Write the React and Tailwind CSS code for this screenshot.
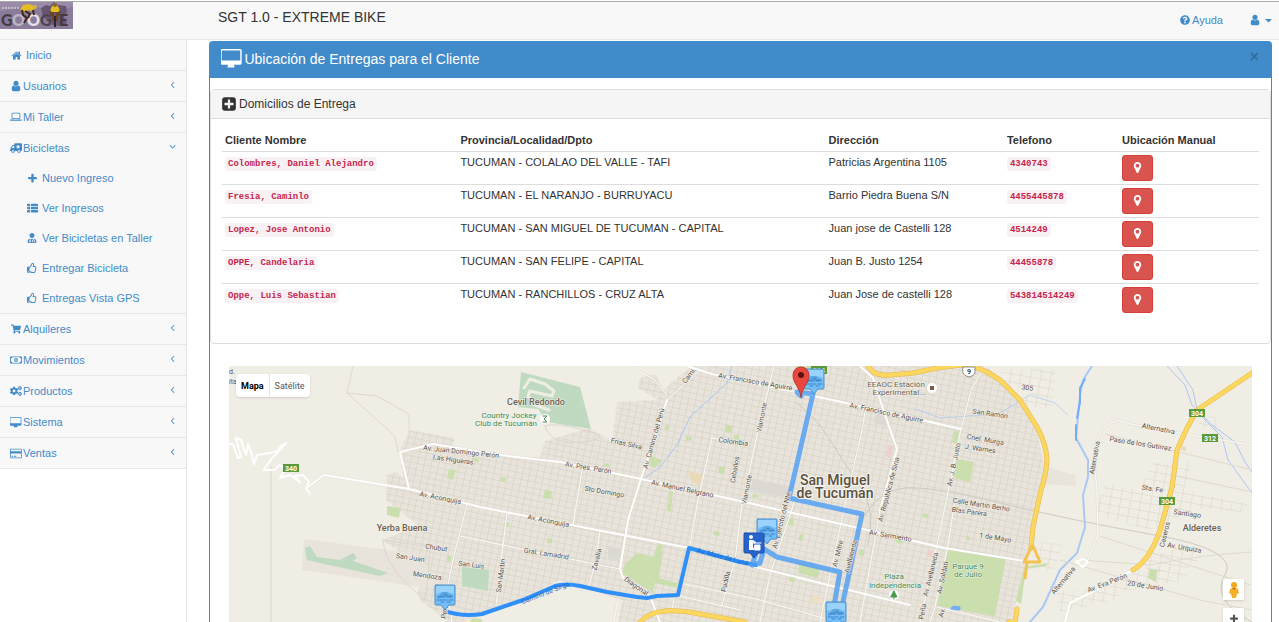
import { FaAmbulance, FaUserMd, FaRegThumbsUp, FaShoppingCart, FaRegMoneyBillAlt, FaCogs, FaQuestionCircle } from "react-icons/fa";

const PATHS = {
  home: [1792, "M1472 992v480q0 26-19 45t-45 19h-384v-384h-256v384h-384q-26 0-45-19t-19-45v-480q0-1 .5-3t.5-3l575-474 575 474q1 2 1 6zm223-69l-62 74q-8 9-21 11h-3q-13 0-21-7l-692-577-692 577q-12 8-24 7-13-2-21-11l-62-74q-8-10-7-23.5t11-21.5l719-599q32-26 76-26t76 26l244 204v-195q0-14 9-23t23-9h192q14 0 23 9t9 23v408l219 182q10 8 11 21.5t-7 23.5z"],
  user: [1792, "M1536 1399q0 109-62.5 187t-150.5 78h-854q-88 0-150.5-78t-62.5-187q0-85 8.5-160.5t31.5-152 58.5-131 94-89 134.5-34.5q131 128 313 128t313-128q76 0 134.5 34.5t94 89 58.5 131 31.5 152 8.5 160.5zm-256-887q0 159-112.5 271.5t-271.5 112.5-271.5-112.5-112.5-271.5 112.5-271.5 271.5-112.5 271.5 112.5 112.5 271.5z"],
  laptop: [1920, "M416 1152q-66 0-113-47t-47-113v-704q0-66 47-113t113-47h1088q66 0 113 47t47 113v704q0 66-47 113t-113 47h-1088zm-32-864v704q0 13 9.5 22.5t22.5 9.5h1088q13 0 22.5-9.5t9.5-22.5v-704q0-13-9.5-22.5t-22.5-9.5h-1088q-13 0-22.5 9.5t-9.5 22.5zm1376 928h160v96q0 40-47 68t-113 28h-1600q-66 0-113-28t-47-68v-96h1760zm-720 96q16 0 16-16t-16-16h-160q-16 0-16 16t16 16h160z"],
  desktop: [1920, "M1728 992v-832q0-13-9.5-22.5t-22.5-9.5h-1600q-13 0-22.5 9.5t-9.5 22.5v832q0 13 9.5 22.5t22.5 9.5h1600q13 0 22.5-9.5t9.5-22.5zm128-832v1088q0 66-47 113t-113 47h-544q0 37 16 77.5t32 71 16 43.5q0 26-19 45t-45 19h-512q-26 0-45-19t-19-45q0-14 16-44t32-70 16-78h-544q-66 0-113-47t-47-113v-1088q0-66 47-113t113-47h1600q66 0 113 47t47 113z"],
  card: [1920, "M1760 128q66 0 113 47t47 113v1216q0 66-47 113t-113 47h-1600q-66 0-113-47t-47-113v-1216q0-66 47-113t113-47h1600zm-1600 128q-13 0-22.5 9.5t-9.5 22.5v224h1664v-224q0-13-9.5-22.5t-22.5-9.5h-1600zm1600 1280q13 0 22.5-9.5t9.5-22.5v-608h-1664v608q0 13 9.5 22.5t22.5 9.5h1600zm-1504-128v-128h256v128h-256zm384 0v-128h384v128h-384z"],
  plus: [1792, "M1600 736v192q0 40-28 68t-68 28h-416v416q0 40-28 68t-68 28h-192q-40 0-68-28t-28-68v-416h-416q-40 0-68-28t-28-68v-192q0-40 28-68t68-28h416v-416q0-40 28-68t68-28h192q40 0 68 28t28 68v416h416q40 0 68 28t28 68z"],
  list: [1792, "M512 1248v192q0 40-28 68t-68 28h-320q-40 0-68-28t-28-68v-192q0-40 28-68t68-28h320q40 0 68 28t28 68zm0-512v192q0 40-28 68t-68 28h-320q-40 0-68-28t-28-68v-192q0-40 28-68t68-28h320q40 0 68 28t28 68zm1280 512v192q0 40-28 68t-68 28h-960q-40 0-68-28t-28-68v-192q0-40 28-68t68-28h960q40 0 68 28t28 68zm-1280-1024v192q0 40-28 68t-68 28h-320q-40 0-68-28t-28-68v-192q0-40 28-68t68-28h320q40 0 68 28t28 68zm1280 512v192q0 40-28 68t-68 28h-960q-40 0-68-28t-28-68v-192q0-40 28-68t68-28h960q40 0 68 28t28 68zm0-512v192q0 40-28 68t-68 28h-960q-40 0-68-28t-28-68v-192q0-40 28-68t68-28h960q40 0 68 28t28 68z"],
  plusSquare: [1792, "M1408 960v-128q0-26-19-45t-45-19h-320v-320q0-26-19-45t-45-19h-128q-26 0-45 19t-19 45v320h-320q-26 0-45 19t-19 45v128q0 26 19 45t45 19h320v320q0 26 19 45t45 19h128q26 0 45-19t19-45v-320h320q26 0 45-19t19-45zm256-544v960q0 119-84.5 203.5t-203.5 84.5h-960q-119 0-203.5-84.5t-84.5-203.5v-960q0-119 84.5-203.5t203.5-84.5h960q119 0 203.5 84.5t84.5 203.5z"],
  marker: [1792, "M1152 640q0-106-75-181t-181-75-181 75-75 181 75 181 181 75 181-75 75-181zm256 0q0 109-33 179l-364 774q-16 33-47.5 52t-67.5 19-67.5-19-46.5-52l-365-774q-33-70-33-179 0-212 150-362t362-150 362 150 150 362z"],
  left: [1792, "M1203 544q0 13-10 23l-393 393 393 393q10 10 10 23t-10 23l-50 50q-10 10-23 10t-23-10l-466-466q-10-10-10-23t10-23l466-466q10-10 23-10t23 10l50 50q10 10 10 23z"],
  down: [1792, "M1395 736q0 13-10 23l-466 466q-10 10-23 10t-23-10l-466-466q-10-10-10-23t10-23l50-50q10-10 23-10t23 10l393 393 393-393q10-10 23-10t23 10l50 50q10 10 10 23z"],
  caret: [1792, "M1408 704q0 26-19 45l-448 448q-19 19-45 19t-45-19l-448-448q-19-19-19-45t19-45 45-19h896q26 0 45 19t19 45z"],
};

function Icon({ name, className = "h-[11px] w-auto" }) {
  const [w, d] = PATHS[name];
  return (
    <svg viewBox={`0 0 ${w} 1792`} className={`shrink-0 ${className}`} fill="currentColor" aria-hidden="true">
      <path d={d} />
    </svg>
  );
}

const MENU = [
  { label: "Inicio", icon: <Icon name="home" />, gap: true },
  { label: "Usuarios", icon: <Icon name="user" className="size-3" />, arrow: "left" },
  { label: "Mi Taller", icon: <Icon name="laptop" />, arrow: "left" },
  {
    label: "Bicicletas",
    icon: <FaAmbulance size={12} className="-scale-x-100" />,
    arrow: "down",
    children: [
      { label: "Nuevo Ingreso", icon: <Icon name="plus" /> },
      { label: "Ver Ingresos", icon: <Icon name="list" /> },
      { label: "Ver Bicicletas en Taller", icon: <FaUserMd size={10} /> },
      { label: "Entregar Bicicleta", icon: <FaRegThumbsUp size={10} /> },
      { label: "Entregas Vista GPS", icon: <FaRegThumbsUp size={10} /> },
    ],
  },
  { label: "Alquileres", icon: <FaShoppingCart size={10} />, arrow: "left" },
  { label: "Movimientos", icon: <FaRegMoneyBillAlt size={12} />, arrow: "left" },
  { label: "Productos", icon: <FaCogs size={12} />, arrow: "left" },
  { label: "Sistema", icon: <Icon name="desktop" />, arrow: "left" },
  { label: "Ventas", icon: <Icon name="card" />, arrow: "left" },
];

const ROWS = [
  ["Colombres, Daniel Alejandro", "TUCUMAN - COLALAO DEL VALLE - TAFI", "Patricias Argentina 1105", "4340743"],
  ["Fresia, Caminlo", "TUCUMAN - EL NARANJO - BURRUYACU", "Barrio Piedra Buena S/N", "4455445878"],
  ["Lopez, Jose Antonio", "TUCUMAN - SAN MIGUEL DE TUCUMAN - CAPITAL", "Juan jose de Castelli 128", "4514249"],
  ["OPPE, Candelaria", "TUCUMAN - SAN FELIPE - CAPITAL", "Juan B. Justo 1254", "44455878"],
  ["Oppe, Luis Sebastian", "TUCUMAN - RANCHILLOS - CRUZ ALTA", "Juan Jose de castelli 128", "543814514249"],
];

function Logo() {
  return (
    <svg viewBox="0 0 73 27" className="h-[27px] w-[73px]" role="img" aria-label="Logo">
      <rect width="73" height="27" fill="#8b7b9b" />
      <path d="M0 0h73v5l-20 3L30 4 0 9z" fill="#9a8ba9" />
      <path d="M41 6l5-3 4 1 4-4 4 3 8 1 1 6-3 5 3 6-6 3-8-1-5-5-5-3z" fill="#675673" />
      <path d="M2 6h17" stroke="#d5cedd" strokeWidth="2" strokeDasharray="2 1" opacity=".7" />
      <g fontFamily="Lato, sans-serif" fontWeight="900" fontSize="16">
        <text x="1" y="24" fill="#463c43">G</text>
        <text x="12" y="24" fill="#bdb6c2">O</text>
        <text x="27" y="24" fill="#e6e2e8">O</text>
        <text x="40" y="24" fill="#4f4552">G</text>
        <text x="59" y="24" fill="#463a3d">E</text>
      </g>
      <path d="M20 8l3-5 6-1 5 2 1 3-4 2-2-1-4 2z" fill="#e5bd24" />
      <circle cx="35" cy="5" r="2" fill="#cdb25a" />
      <path d="M22 8l1 5 4 3-3 5M25 9l5 3-2 4M33 8l1 5" stroke="#3b2a1c" strokeWidth="2" fill="none" />
      <path d="M51 6l2-3 2-2 2 2 2 3 1 4h-10z" fill="#e5bd24" />
      <circle cx="55" cy="3" r="2" fill="#8a6a2a" />
      <path d="M50 9l2 5M60 9l-2 5M53 10v9M57 10v9" stroke="#6a4424" strokeWidth="2" fill="none" />
      <path d="M55 14v11" stroke="#2f2730" strokeWidth="2" />
    </svg>
  );
}

const LABELS = [
  [461, 454, 7, 6, "Av. Juan Domingo Perón"],
  [453, 462, 7, 8, "Las Higueras"],
  [440, 500, 7, 11, "Av. Aconquija"],
  [548, 523, 7, 11, "Av. Aconquija"],
  [436, 550, 7, 8, "Chubut"],
  [410, 560, 7, 8, "San Juan"],
  [427, 578, 7, 8, "Mendoza"],
  [471, 567, 7, 7, "San Luis"],
  [503, 576, 7, -82, "San Martín"],
  [546, 556, 7, 9, "Gral. Lamadrid"],
  [599, 560, 7, -76, "Zavalía"],
  [626, 446, 7, 13, "Frías Silva"],
  [588, 470, 7, 9, "Av. Pres. Perón"],
  [604, 494, 7, 10, "Sto Domingo"],
  [656, 439, 7, -74, "Av. Camino del Perú"],
  [691, 377, 7, -52, "Cami."],
  [755, 384, 7, 10, "Av. Francisco de Aguirre"],
  [886, 415, 7, 12, "Av. Francisco de Aguirre"],
  [764, 418, 7, -78, "Viamonte"],
  [749, 490, 7, -78, "Viamonte"],
  [733, 444, 7, 8, "Colombia"],
  [737, 470, 7, -80, "Ceballos"],
  [682, 491, 7, 12, "Av. Manuel Belgrano"],
  [635, 588, 7, 35, "Diagonal"],
  [728, 582, 7, -78, "Padilla"],
  [784, 520, 7, -76, "Av. Ejército del Nte."],
  [840, 554, 7, -76, "Av. Mitre"],
  [853, 557, 7, -76, "Avellaneda"],
  [891, 490, 7, -75, "Av. República de Siria"],
  [890, 538, 7, 10, "Av. Sarmiento"],
  [956, 465, 7, -78, "Av. J. B. Justo"],
  [933, 575, 7, -76, "Av. Avellaneda"],
  [945, 578, 7, -78, "Av. Soldati"],
  [925, 612, 7, -78, "Peña"],
  [944, 613, 7, -78, "Av."],
  [990, 416, 7, 8, "San Ramón"],
  [985, 442, 7, 10, "Cnel. Murga"],
  [980, 451, 7, 8, "J. Warnes"],
  [981, 507, 7, 9, "Calle Martín Berho"],
  [969, 514, 7, 7, "Blas Parera"],
  [995, 540, 7, 9, "1 de Mayo"],
  [1027, 390, 7, 8, "305"],
  [1158, 431, 7, 11, "Alternativa"],
  [1140, 446, 7, 9, "Paso de los Gutirrez"],
  [1097, 458, 7, -80, "Alternativa"],
  [1152, 491, 7, 8, "Sta. Fe"],
  [1187, 516, 7, 8, "Santiago"],
  [1167, 535, 7, -76, "Caseros"],
  [1184, 550, 7, 10, "Av. Urquiza"],
  [1108, 585, 7, -21, "Av. Eva Perón"],
  [1145, 588, 7, 9, "20 de Junio"],
  [1065, 582, 7, -50, "Alternativa"],
  [447, 612, 7, -80, "Perú"],
  [232, 374, 7, 0, "d."],
  [233, 384, 7, 0, "ita"],
];

const MAIN_ROADS = [
  "M1133 570L1100 588L1070 603L1065 622",
  "M400 452L433 444L500 455L560 462L641 479L740 501L850 526L944 548L1030 562",
  "M324 475L409 489L400 452M324 475L308 487",
  "M409 489L480 507L571 525L628 536L689 548L760 568L840 588L910 605",
  "M687 366L712 374L860 406L961 429",
  "M860 366L873 378L884 412L897 449L880 510",
  "M667 400L641 479L628 520L620 569L623 578L650 596L660 622",
];

const MINOR_ROADS = [
  "M1252 445L1185 434L1130 424L1117 420L1104 427L1096 442L1094 462L1097 490L1098 535L1087 562",
  "M452 622L447 590L453 560L467 504",
  "M460 536L540 553L620 569",
  "M985 366L971 390L961 429L937 545L920 622",
  "M700 370L667 400M630 366L655 380L667 395",
  "M712 438L740 442M712 438L698 500L690 545",
  "M774 366L756 440L742 505L735 560L722 605",
  "M795 500L770 575L760 622",
  "M880 510L860 622",
  "M865 412L862 430L846 500L820 622",
  "M507 513L500 570L496 606M507 513l4 1",
  "M583 465L573 525M600 530L596 560L588 590",
  "M680 583L760 600L900 640M680 596L740 610",
  "M955 500L948 545L935 607L930 622M937 607L1000 622",
  "M618 598L614 622M674 598L672 612",
];

const PARKS = [
  "M387 506L401 508L399 518L387 515z", "M449 469L456 470L453 480L447 478z", "M447 556h4v5h-4z", "M472 458l7 1v3l-7-1z",
  "M545 490l7 1-1 8-8-1z", "M501 477l5 1-1 4-5-1z", "M505 522l4 1v4h-4z", "M548 538l4 1v4h-5z", "M604 463l5 1v3l-5-1z", "M670 491l3 1-2 20-4-2z",
  "M650 455l12 6-7 7-5-2z", "M666 425l3 1v4l-5-1z", "M685 436l7 1v4l-6-1z", "M726 425l6 1-1 7-6-1z", "M719 466l6 1-1 7-6-1z", "M734 435h5v4h-5z",
  "M714 531l6 1-1 4-5-1z", "M793 366h28l-3 7-19-4z", "M787 518l7 1-1 7-7-2z", "M800 534l4 1-2 6-4-1z", "M799 564l21 4-2 10-20-5z", "M790 575l6 1-2 7-5-2z",
  "M753 494l6 1-1 3-6-1z", "M923 513l5 1v4l-6-1z", "M860 549l5 1-1 6-6-1z", "M957 459l17 3-4 20-16-4z", "M954 431l5 1-2 12-5-2z", "M967 536l3 1-1 4-3-1z",
  "M1150 569l7 1-1 12-8-4z", "M1024 567l24-4-2 3-20 3-5 35-5-3z", "M896 539l7 1-1 4-6-1z", "M472 618l10 1v3h-12z",
];

const SHIELDS = [[1197, 413, "304"], [1210, 438, "312"], [1167, 501, "304"], [291, 468, "340"], [819, 370, "314"]];

const MARKER_SHAPE = "M-9 -25h18q1 0 1 1v18q0 1-1 1h-5l-4 5-4-5h-5q-1 0-1-1v-18q0-1 1-1z";

function CarMarker({ x, y }) {
  return (
    <g transform={`translate(${x} ${y})`}>
      <path d={MARKER_SHAPE} fill="#74bef9" stroke="#4f8fc4" strokeWidth="1" />
      <path d="M-9 -24h18v8q-9-4-18 0z" fill="#a3d7fd" opacity=".8" />
      <path d="M-8 -12q0-3 3-3 2-4 5-3 3-1 4 2 4 0 4 4z" fill="#5ba6e2" />
      <path d="M-7 -12l3-2 2 1 3-3 2 3 4-1M-8 -10h5m1 0h4m2 0h4M-4 -8h3m3 0h3" stroke="#3c84c6" strokeWidth="1" />
    </g>
  );
}

function MapDrawing() {
  return (
    <svg viewBox="229 366 1023 256" preserveAspectRatio="xMidYMid slice" className="block h-full w-full" fill="none" strokeLinejoin="round" strokeLinecap="round" fontFamily="Roboto, sans-serif">
      <defs>
        <pattern id="blocks" width="7" height="6" patternUnits="userSpaceOnUse" patternTransform="rotate(12)">
          <path d="M0 0H7M0 0V6" stroke="#d3cdc0" strokeWidth="1" />
        </pattern>
        <pattern id="sparse" width="10" height="8" patternUnits="userSpaceOnUse" patternTransform="rotate(10)">
          <path d="M0 0H10M0 0V8" stroke="#d8d3c6" strokeWidth="1" />
        </pattern>
      </defs>
      <rect x="0" y="300" width="1600" height="400" fill="#f0ede5" />

      <g id="districts">
        {[
          "M410 430L455 438L452 450L517 458L540 457L545 441L590 428L612 442L617 402L655 400L672 382L692 366L985 366L1010 385L1037 430L1045 470L1033 530L1026 570L1010 622L618 622L622 600L560 580L500 610L462 622L448 622L420 600L418 590L430 575L383 540L418 525L386 500L387 475L396 472L403 478L400 450z",
          "M304 539L420 554L440 590L302 570z",
          "M1042 466L1075 475L1076 486L1041 484z",
          "M640 378L655 374L664 392L655 398L638 388z",
        ].map((d) => (
          <g key={d}>
            <path d={d} fill="#e8e4db" />
            {!d.startsWith("M304") && !d.startsWith("M1042") && <path d={d} fill="url(#blocks)" />}
          </g>
        ))}
        {[
          "M1105 484L1140 490L1152 463L1190 462L1185 490L1250 505L1240 512L1200 508L1150 530L1095 515z",
          "M1002 368L1056 370L1052 410L1020 405L1030 392L1000 385z",
          "M1030 540L1062 545L1055 570L1034 570z",
          "M1057 590L1100 590L1140 570L1190 565L1185 580L1130 590L1115 600L1060 612z",
          "M1195 425L1215 412L1218 430z",
          "M1140 560L1190 545L1200 560L1150 575z",
        ].map((d) => <path key={d} d={d} fill="url(#sparse)" />)}
        <path d="M383 540L430 547L426 600Q385 570 383 540z" stroke="#dcd7cb" strokeWidth="1" />
        <path d="M753 479L793 487L789 498L750 490zM876 414l14 3-3 9-13-3zM608 546l13 3-2 12-11-3z" fill="#dcd8d2" />
        <path d="M688 470l14 5-2 10-8-3zM1181 446l5 1v4l-5-1z" fill="#ebd9b7" />
        <path d="M888 445l5 1-3 12-4-2zM928 550l5 1-2 7-5-2z" fill="#efcfcb" />
        <path d="M813 595l7 2-1 7-7-2z" fill="#efdfc3" />
      </g>

      <g id="parks">
        <path d="M521 372L580 387L591 429L547 422L538 409L518 407z" fill="#bfdac1" />
        <path d="M524 388L530 379L545 384L554 391L552 396L538 393L530 391L528 396L535 405L549 410" stroke="#f0ede5" strokeWidth="3" />
        <path d="M305 548L310 546L317 557L340 560L353 553L357 558L353 561L388 573L380 576L320 563L307 560z" fill="#bfdac1" />
        <path d="M462 567L489 570L488 591L462 586z" fill="#bfdac1" />
        <path d="M637 553L653 557L658 544L663 545L659 578L678 583L677 588L655 583L653 593L622 573L626 563z" fill="#cbdfae" />
        <path d="M948 548L1006 558L995 616L937 606z" fill="#cbdfae" />
        {PARKS.map((d) => <path key={d} d={d} fill="#cbdfae" />)}
      </g>

      <g id="water" stroke="#a9c8f5" strokeWidth="1">
        <path d="M1167 366L1185 385L1192 405L1205 420L1222 437L1228 460L1252 493M1177 366L1193 390L1197 410L1212 425L1235 442L1245 462L1252 472" />
        <path d="M732 366L727 383L690 417L677 445L660 467L645 478" />
        <path d="M915 409L940 418L985 415L1000 413L1030 395L1055 403L1068 415" opacity=".7" />
        <path d="M1092 366L1083 380L1080 395L1078 417L1076 438L1088 460L1088 477L1083 495L1085 527L1077 553L1060 570L1043 607L1030 622" strokeWidth="2" />
        <path d="M1085 379L1080 388L1080 402L1077 418M1076 425L1076 440" stroke="#72adf8" strokeWidth="2" />
        <path d="M951 608l3-2 6 1v3l-8 0z" fill="#72adf8" stroke="#72adf8" />
      </g>

      <g id="rail" stroke="#cfcac0" strokeWidth="1">
        <path d="M796 403Q812 412 830 440T862 490T868 545M865 515Q880 490 905 488T1000 503T1155 535T1225 575T1252 622" />
        <path d="M353 366L347 393L395 436L398 452M347 393L377 396L409 414L409 432M271 466v156" stroke="#dedace" />
        <path d="M1105 434L1252 470M1172 475L1252 492M1100 536L1250 585M1060 560L1200 600L1252 610M1080 560L1150 565Q1200 555 1252 552" stroke="#dedace" />
        <path d="M545 426q10-4 40 4t-2 12-38-16" stroke="#dcd7cb" />
      </g>

      <g id="roads">
        {MAIN_ROADS.map((d) => <path key={d} d={d} stroke="#dcd8ce" strokeWidth="3" opacity=".6" />)}
        {MINOR_ROADS.map((d) => <path key={d} d={d} stroke="#dcd8ce" strokeWidth="3" opacity=".4" />)}
        {MINOR_ROADS.map((d) => <path key={d} d={d} stroke="#fcfbf8" strokeWidth="1" />)}
        {MAIN_ROADS.map((d) => <path key={d} d={d} stroke="#fff" strokeWidth="2" />)}
        <path d="M229 444L233 444L238 458L241 457L239 450L236 438L241 440L246 455L248 444L251 452L254 464L257 455L270 453L277 451L281 446L286 443L281 449L273 457L265 468L264 470L275 470L279 465L286 468L280 478L290 475L300 482L294 476L303 475L309 482L306 488L310 494" stroke="#fff" strokeWidth="2" />
        <path d="M1076 562l7-3 5 3-5 5z" stroke="#fff" strokeWidth="2" />
        <g id="highways">
          {[["#e5b54e", 5], ["#fcd75f", 4]].map(([stroke, w]) => (
            <g key={stroke} stroke={stroke} strokeWidth={w}>
              <path d="M868 366L873 372Q880 376 890 375L913 373L937 368L960 365L975 367L987 372L1000 380L1020 400L1037 427Q1046 443 1047 460Q1046 475 1041 490L1033 527L1031 548" />
              <path d="M1252 373L1197 410L1187 428L1177 450L1172 487L1160 530Q1150 560 1133 570" />
              <path d="M640 622Q650 612 665 611T700 614L745 622" />
              <path d="M1017 609L1015 622L1009 622" />
            </g>
          ))}
          <path d="M1032 546L1024 562L1040 562L1033 546M1027 563L1025 578" stroke="#f2c351" strokeWidth="3" />
        </g>
      </g>

      <g id="route">
        <path d="M445 611Q462 617 482 614L523 600L555 586Q565 583 580 586L607 592L637 597L647 598L657 596L678 595L689 548L740 562L756 565" stroke="#2f90fb" strokeWidth="4" />
        <g stroke="#4f9ff5" strokeWidth="5" opacity=".82">
          <path d="M801 396L797 392L813 394L789 498L862 514L842 606" />
          <path d="M758 548L752 565L760 563L764 549L777 557L840 572L834 606" />
        </g>
        <g fontSize="7" fill="#1f6cc4" textAnchor="middle">
          <text transform="translate(546 595) rotate(-21)">Camino de Sirga</text>
          <text transform="translate(722 559) rotate(14)">Av. Mate de Luna</text>
        </g>
      </g>

      <g id="labels" textAnchor="middle" fill="#565049" stroke="#f6f4ef" strokeWidth="1" paintOrder="stroke">
        {LABELS.map(([x, y, size, angle, text]) => (
          <text key={`${x}-${y}`} transform={`translate(${x} ${y}) rotate(${angle})`} fontSize={size}>{text}</text>
        ))}
        <g fontSize="9" fontWeight="500" fill="#6b6152">
          <text x="536" y="405">Cevil Redondo</text>
          <text x="402" y="531">Yerba Buena</text>
          <text x="1202" y="531">Alderetes</text>
        </g>
        <g fontSize="8" fill="#6b6152">
          <text x="896" y="387">EEAOC Estación</text>
          <text x="899" y="395">Experimental...</text>
        </g>
        <g fontSize="8" fill="#3f8a4c">
          <text x="509" y="418">Country Jockey</text>
          <text x="506" y="426">Club de Tucumán</text>
          <text x="894" y="579">Plaza</text>
          <text x="895" y="588">Independencia</text>
          <text x="968" y="569">Parque 9</text>
          <text x="968" y="577">de Julio</text>
        </g>
        <g fontSize="14" fontWeight="500" fill="#5a5140" strokeWidth="2">
          <text x="835" y="485">San Miguel</text>
          <text x="835" y="498">de Tucumán</text>
        </g>
      </g>

      <g id="places">
        <circle cx="932" cy="388" r="5" fill="#fff" />
        <path d="M930 386h4v4h-4z" fill="#7a5b4c" />
        <circle cx="894" cy="595" r="5" fill="#fff" />
        <path d="M894 591l3 6h-6zM894 597v2" fill="#4a9a4f" stroke="#4a9a4f" strokeWidth="1" />
        <circle cx="545" cy="419" r="5" fill="#fff" />
        <path d="M543 416h4l-3 3 3 3h-4" stroke="#4a8a55" strokeWidth="1" />
        {SHIELDS.map(([x, y, text]) => (
          <g key={`${x}-${y}`}>
            <rect x={x - 8} y={y - 4} width="16" height="8" fill="#5a9a3a" />
            <text x={x} y={y + 3} fontSize="7" fontWeight="700" textAnchor="middle" fill="#fff">{text}</text>
          </g>
        ))}
        <path d="M963 367h12v6q-1 3-6 4q-5-1-6-4z" fill="#fff" stroke="#8b8b8b" strokeWidth="1" />
        <text x="969" y="374" fontSize="7" fontWeight="700" textAnchor="middle" fill="#444">9</text>
      </g>

      <g id="markers">
        <CarMarker x={445} y={610} />
        <CarMarker x={814} y={394} />
        <CarMarker x={767} y={544} />
        <CarMarker x={836} y={627} />
        <g transform="translate(754 558)">
          <path d={MARKER_SHAPE} fill="#2863cc" stroke="#1d4ea6" strokeWidth="1" />
          <circle cx="-3" cy="-21" r="2" fill="#fff" />
          <path d="M-5 -18h4l3 2-1 2-2-1v4l2 3h-6z" fill="#fff" />
          <path d="M0 -15h7M1 -13h5v5h-5z" fill="#fff" stroke="#fff" strokeWidth="1" />
        </g>
        <path d="M801 397C800 387 793 384 793 375a8 8 0 0 1 16 0C809 384 802 387 801 397z" fill="#e8483d" stroke="#b93a32" strokeWidth="1" />
        <circle cx="801" cy="375" r="3" fill="#5c1410" />
      </g>
    </svg>
  );
}

function DeliveryMap() {
  return (
    <section aria-label="Mapa de entregas" className="relative mx-[19px] mt-[22px] h-64 overflow-hidden font-[Roboto,sans-serif]">
      <MapDrawing />
      <div className="absolute top-2 left-[7px] flex h-[23px] divide-x divide-[#e5e5e5] rounded-sm bg-white text-[9px] shadow">
        <button type="button" className="px-[5px] font-bold text-black">Mapa</button>
        <button type="button" className="px-[5px] text-[#565656]">Satélite</button>
      </div>
      <div className="absolute top-[213px] right-2 flex flex-col gap-2">
        <button type="button" aria-label="Street View" className="flex size-[21px] items-center justify-center bg-white shadow">
          <svg viewBox="0 0 10 16" className="h-4 w-[10px]" aria-hidden="true">
            <circle cx="5" cy="3" r="3" fill="#f0a81c" />
            <path d="M1 7q4-3 8 0l1 4-2 1-1 4H3l-1-4-2-1z" fill="#f5b229" />
            <path d="M3 6l2 2 2-2z" fill="#c9661b" />
          </svg>
        </button>
        <button type="button" aria-label="Acercar" className="flex size-[21px] items-center justify-center bg-white text-[#555] shadow">
          <Icon name="plus" className="size-[10px]" />
        </button>
      </div>
    </section>
  );
}

function Sidebar() {
  return (
    <nav aria-label="Principal" className="w-[187px] shrink-0 border-r border-[#e7e7e7] text-[#428bca]">
      <ul className="bg-[#f8f8f8]">
        {MENU.map((item) => (
          <li key={item.label} className="border-b border-[#e7e7e7]">
            <a href="#" className={`flex h-[30px] items-center pr-2 pl-[9px] ${item.gap ? "gap-[3px]" : ""}`}>
              <span className="flex w-[14px] justify-center">{item.icon}</span>
              <span>{item.label}</span>
              {item.arrow && <Icon name={item.arrow} className="mb-1 ml-auto size-[11px]" />}
            </a>
            {item.children && (
              <ul>
                {item.children.map((sub) => (
                  <li key={sub.label}>
                    <a href="#" className="flex h-[30px] items-center gap-[3px] pl-[25px]">
                      <span className="flex w-[14px] justify-center">{sub.icon}</span>
                      {sub.label}
                    </a>
                  </li>
                ))}
              </ul>
            )}
          </li>
        ))}
      </ul>
    </nav>
  );
}

function Code({ children }) {
  return (
    <code className="inline-block rounded-[3px] bg-[#f9f2f4] px-[3px] font-['Liberation_Mono','Courier_New',monospace] text-[9px] leading-[14px] font-bold text-[#c7254e]">
      {children}
    </code>
  );
}

export default function App() {
  return (
    <div className="flex min-h-screen flex-col bg-white pt-px font-['Liberation_Sans',Arial,sans-serif] text-[11px] leading-4 text-[#333]">
      <header className="flex h-[39px] items-start border-t border-b border-t-[#aaa] border-b-[#e7e7e7] bg-[#f8f8f8]">
        <a href="#" className="w-[218px] shrink-0"><Logo /></a>
        <h1 className="pt-[7px] text-[14px] leading-4">SGT 1.0 - EXTREME BIKE</h1>
        <div className="ml-auto flex items-center gap-[26px] pt-[10px] pr-[5px] text-[#428bca]">
          <a href="#" className="flex items-center gap-[2px]"><FaQuestionCircle size={10} />Ayuda</a>
          <button type="button" aria-label="Cuenta" className="flex items-center gap-[2px]">
            <Icon name="user" className="size-3" />
            <Icon name="caret" className="size-[11px]" />
          </button>
        </div>
      </header>

      <div className="flex grow">
        <Sidebar />
        <main className="mt-px mr-[7px] ml-[22px] flex min-w-0 grow flex-col">
          <section className="grow rounded-t border-x border-t border-[#428bca]">
            <div className="flex h-9 items-center gap-[2px] bg-[#428bca] px-[11px] pb-[3px] text-white">
              <Icon name="desktop" className="h-5 w-auto" />
              <h2 className="text-[14px]">Ubicación de Entregas para el Cliente</h2>
              <button type="button" aria-label="Cerrar" className="mr-px mb-[3px] ml-auto text-[16px] font-bold text-[#346fa1]">×</button>
            </div>

            <section className="mt-[11px] rounded border border-[#ddd]">
              <div className="flex h-[29px] items-center gap-[2px] border-b border-[#ddd] bg-[#f5f5f5] px-[10px]">
                <Icon name="plusSquare" className="size-4" />
                <h3 className="text-[12px]">Domicilios de Entrega</h3>
              </div>
              <div className="px-[11px] pt-3 pb-[27px]">
                <table className="w-full table-fixed border-collapse text-left">
                  <thead>
                    <tr className="h-5">
                      <th className="w-[22.7%] px-[3px] pt-0 pb-[2px]">Cliente Nombre</th>
                      <th className="w-[35.5%] px-[3px] pt-0 pb-[2px]">Provincia/Localidad/Dpto</th>
                      <th className="w-[17.2%] px-[3px] pt-0 pb-[2px]">Dirección</th>
                      <th className="w-[11.1%] px-[3px] pt-0 pb-[2px]">Telefono</th>
                      <th className="w-[13.5%] px-[3px] pt-0 pb-[2px]">Ubicación Manual</th>
                    </tr>
                  </thead>
                  <tbody>
                    {ROWS.map(([name, place, address, phone]) => (
                      <tr key={name} className="h-[33px] border-t border-[#ddd] align-top">
                        <td className="px-[3px] pt-[2px]"><Code>{name}</Code></td>
                        <td className="px-[3px] pt-[2px]">{place}</td>
                        <td className="px-[3px] pt-[2px]">{address}</td>
                        <td className="px-[3px] pt-[2px]"><Code>{phone}</Code></td>
                        <td className="px-[3px] pt-[3px]">
                          <button type="button" aria-label={`Ubicar a ${name}`} className="flex h-[26px] w-[31px] items-center justify-center rounded-[3px] border border-[#d43f3a] bg-[#d9534f] text-white">
                            <Icon name="marker" className="size-[13px]" />
                          </button>
                        </td>
                      </tr>
                    ))}
                  </tbody>
                </table>
              </div>
            </section>

            <DeliveryMap />
          </section>
        </main>
      </div>
    </div>
  );
}
